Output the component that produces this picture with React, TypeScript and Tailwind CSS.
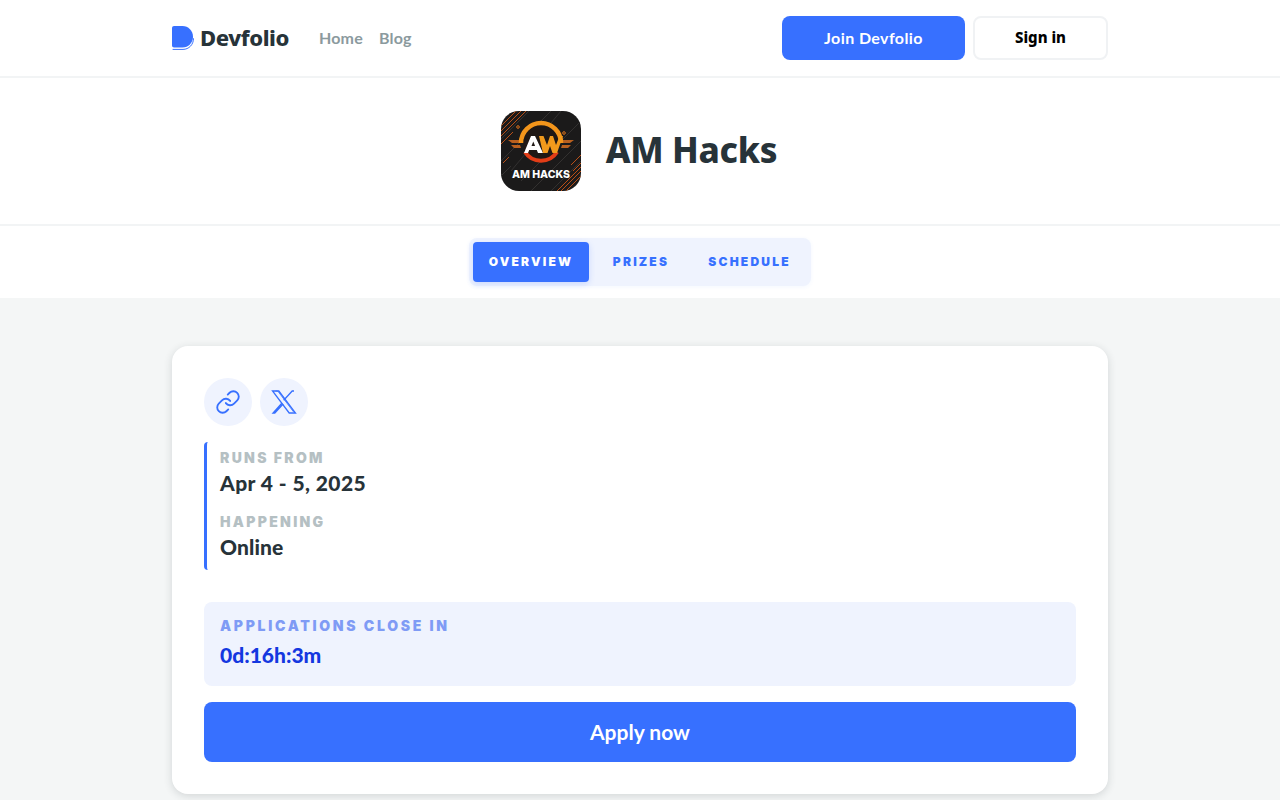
import { Link } from 'lucide-react';

const sans = 'font-["Lato","Noto_Sans",sans-serif]';
const heavy = 'font-["Noto_Sans","Lato",sans-serif]';
const label = 'font-["Inter","Liberation_Sans",sans-serif] font-black uppercase';

const DevfolioLogo = () => (
  <svg width="22" height="24" viewBox="0 0 22 24" fill="none">
    <path d="M1 23.400h10c5.800 0 10.500-4.700 10.500-10.700" stroke="#3770ff" strokeWidth="1" strokeLinecap="round" />
    <path d="M2 0h8.500C16.300 0 21 4.800 21 10.800s-4.700 10.800-10.500 10.800H2c-1.100 0-2-.9-2-2V2C0 .9.900 0 2 0z" fill="#3770ff" />
  </svg>
);

const XIcon = () => (
  <svg width="26" height="24" viewBox="0 0 26 24" fill="none" stroke="#3770ff" strokeWidth="1.300" strokeLinejoin="miter">
    <path d="M1.500 1h6.300l16.700 22h-6.300z" />
    <path d="M4.500 1h2.200l15.900 21" strokeWidth="0.800" />
    <path d="M23 1h-1.800l-8.500 9.200M10.800 13.200 2 23h1.800l8.300-9" />
  </svg>
);

const HackLogo = () => (
  <svg width="80" height="80" viewBox="0 0 80 80" className="rounded-[18px]">
    <rect width="80" height="80" fill="#1b1a1a" />
    <g stroke="#333130" strokeWidth="1">
      <path d="M-10 30 30-10M-10 38 38-10M0 50 50 0M10 60 60 0M20 70 80 10M30 80 80 30M40 90 90 40M-5 70 10 55M50 90 90 50" />
    </g>
    <g stroke="#b84f17" strokeWidth="1">
      <path d="M0 10 10 0M0 15 15 0M0 20 20 0M0 25 25 0M0 33 12 21M60 80 80 60M65 80 80 65M70 80 80 70M56 80 80 56M70 54 80 44M72 60 80 52M2 52 8 46" />
    </g>
    <circle cx="17" cy="16" r="1.300" fill="none" stroke="#d8701c" />
    <circle cx="63" cy="22" r="1.300" fill="none" stroke="#d8701c" />
    <path d="M7 29h12l1 3H11zM73 29H61l-1 3h9zM10 34h9l1 3h-7zM70 34h-9l-1 3h7z" fill="#b9601f" />
    <circle cx="40" cy="32" r="18" fill="#1f1815" />
    <path d="M20 32a20 20 0 0 1 40 0" fill="none" stroke="#f3951b" strokeWidth="4.500" />
    <path d="M24 41a19 19 0 0 0 32 0" fill="none" stroke="#e23d17" strokeWidth="4" />
    <path d="M23 42 30 25h4l8 17h-5l-1.200-3h-7.600l-1.200 3z" fill="#fff" />
    <path d="M30.500 35h3.600l-1.800-4.500z" fill="#1f1815" />
    <path d="M38 25h4.500l3.500 9 3-9h3l3 9 3.500-9H62l-6 17h-4.500l-2.500-7-2.500 7H42z" fill="#f29a1c" />
    <text x="40" y="67" textAnchor="middle" fill="#fff" fontSize="10.500" fontWeight="800" fontFamily="Inter, sans-serif">AM HACKS</text>
  </svg>
);

export default function App() {
  return (
    <div className={`min-h-[800px] bg-[#f4f6f6] text-[#273339] ${sans}`}>
      <header className="h-[78px] border-b-2 border-[#f2f4f5] bg-white">
        <div className="mx-auto flex h-[76px] w-[936px] items-center justify-between">
          <div className="flex items-center">
            <DevfolioLogo />
            <span className={`ml-[6px] pb-[1px] text-[22px] font-extrabold tracking-[-0.4px] ${heavy}`}>Devfolio</span>
            <nav className="ml-[30px] flex gap-4 text-[16px] font-bold tracking-[0.2px] text-[#8b9a9e]">
              <span>Home</span>
              <span>Blog</span>
            </nav>
          </div>
          <div className="flex gap-2">
            <button className="h-11 w-[183px] rounded-lg bg-[#3770ff] text-[16px] font-bold tracking-[0.4px] text-white">Join Devfolio</button>
            <button className={`h-11 w-[135px] rounded-lg border-2 border-[#f0f2f4] bg-white pb-[2px] text-[15px] font-extrabold text-black ${heavy}`}>Sign in</button>
          </div>
        </div>
      </header>

      <section className="flex h-[148px] items-center justify-center gap-[25px] border-b-2 border-[#f2f4f5] bg-white pr-[2px]">
        <HackLogo />
        <h1 className={`pb-[2px] text-[35px] font-extrabold tracking-[-0.3px] ${heavy}`}>AM Hacks</h1>
      </section>

      <section className="flex h-[72px] items-center justify-center bg-white">
        <div className="flex h-12 w-[342px] items-center rounded-lg bg-[#eff3fe] p-1 shadow-[0_1px_4px_rgba(55,112,255,0.06)]">
          <div className={`flex h-10 w-[116px] items-center justify-center rounded bg-[#3770ff] text-[12px] tracking-[2.200px] text-white shadow-[0_2px_6px_rgba(55,112,255,0.2)] ${label}`}>Overview</div>
          <div className={`flex h-10 w-[104px] items-center justify-center text-[12px] tracking-[2.200px] text-[#3770ff] ${label}`}>Prizes</div>
          <div className={`flex h-10 w-[113px] items-center justify-center text-[12px] tracking-[2.200px] text-[#3770ff] ${label}`}>Schedule</div>
        </div>
      </section>

      <main className="mx-auto mt-12 w-[936px] rounded-2xl bg-white p-8 shadow-[0_2px_8px_rgba(39,51,57,0.16)]">
        <div className="flex gap-2">
          <span className="flex size-12 items-center justify-center rounded-full bg-[#eff3fe] text-[#3770ff]">
            <Link size={26} strokeWidth={1.700} />
          </span>
          <span className="flex size-12 items-center justify-center rounded-full bg-[#eff3fe]">
            <XIcon />
          </span>
        </div>

        <div className="mt-4 flex h-32 flex-col gap-[14px] rounded-sm border-l-[3px] border-[#3770ff] pl-[13px] pt-[6px]">
          <div>
            <p className={`text-[14px] leading-5 tracking-[2.300px] text-[#b5c0c3] ${label}`}>Runs from</p>
            <p className="text-[21px] font-black leading-[30px] tracking-[0.4px]">Apr 4 - 5, 2025</p>
          </div>
          <div>
            <p className={`text-[14px] leading-5 tracking-[2.300px] text-[#b5c0c3] ${label}`}>Happening</p>
            <p className="text-[21px] font-black leading-[30px] tracking-[0.1px]">Online</p>
          </div>
        </div>

        <div className="mt-8 h-[84px] rounded-lg bg-[#eff3fe] px-4 pt-[14px]">
          <p className={`text-[14px] leading-5 tracking-[2.700px] text-[#7f9bf5] ${label}`}>Applications close in</p>
          <p className="mt-[4px] text-[21px] font-black leading-[30px] text-[#1437e0]">0d:16h:3m</p>
        </div>

        <button className="mt-4 h-[60px] w-full rounded-lg bg-[#3770ff] text-[21px] font-bold text-white">Apply now</button>
      </main>
    </div>
  );
}
